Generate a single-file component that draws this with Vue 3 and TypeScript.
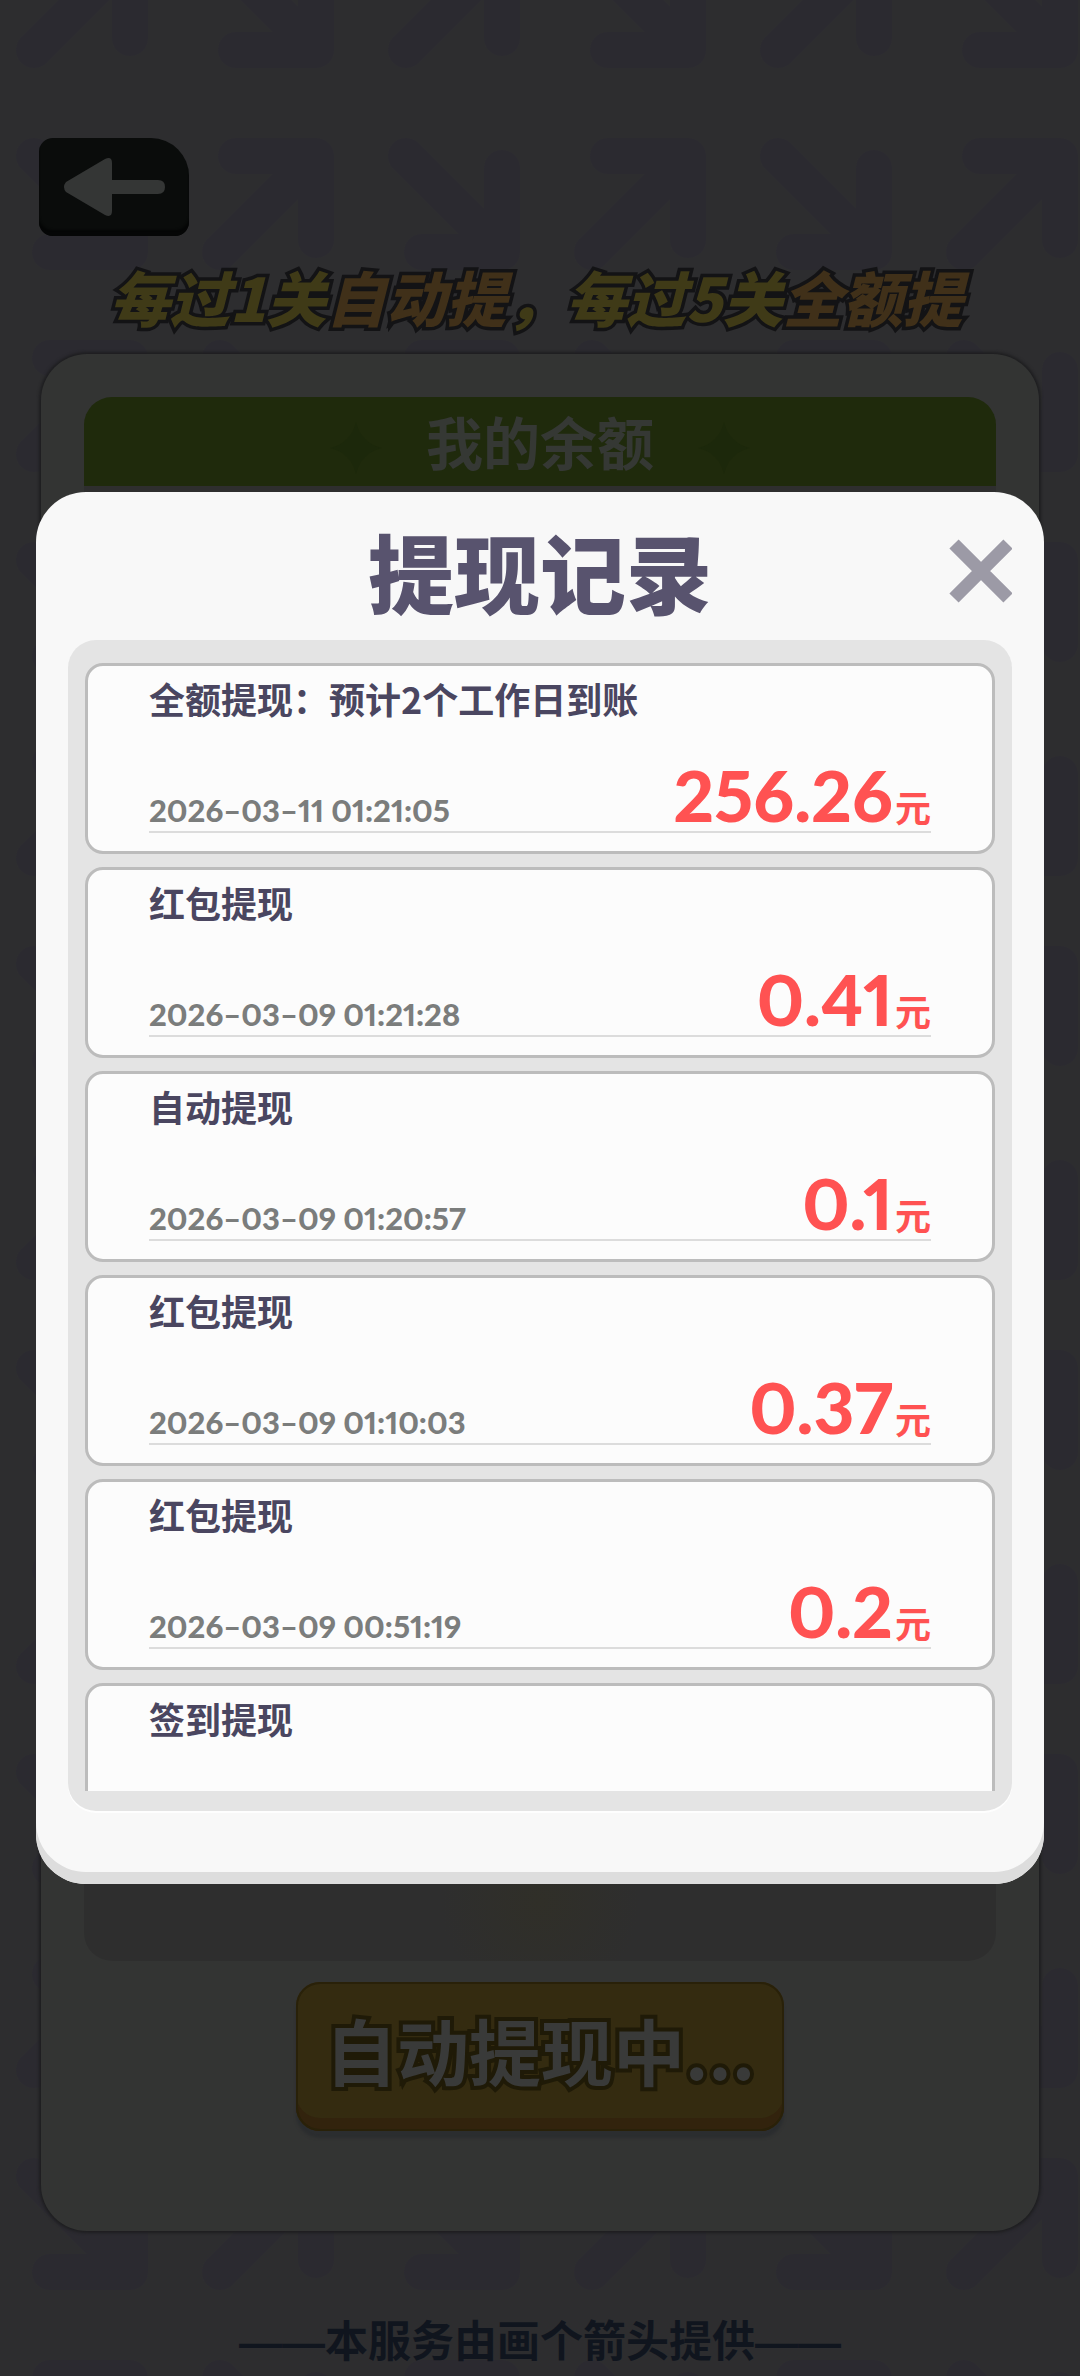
<script setup lang="ts">
import { ref } from 'vue'

interface WithdrawRecord {
  title: string
  time: string
  amount: string
}

const records: WithdrawRecord[] = [
  { title: '全额提现：预计2个工作日到账', time: '2026–03–11 01:21:05', amount: '256.26' },
  { title: '红包提现', time: '2026–03–09 01:21:28', amount: '0.41' },
  { title: '自动提现', time: '2026–03–09 01:20:57', amount: '0.1' },
  { title: '红包提现', time: '2026–03–09 01:10:03', amount: '0.37' },
  { title: '红包提现', time: '2026–03–09 00:51:19', amount: '0.2' },
  { title: '签到提现', time: '', amount: '0.1' },
]

const open = ref(true)
</script>

<template>
  <div class="page" lang="zh-CN">
    <svg class="backdrop" aria-hidden="true">
      <defs>
        <g id="arrow" fill="none" stroke="#2b2a30" stroke-width="36" stroke-linecap="round" stroke-linejoin="round">
          <path d="M36 20H116V104M20 116L112 24" />
        </g>
        <pattern id="arrows" x="14" y="-66" width="372" height="404" patternUnits="userSpaceOnUse">
          <use href="#arrow" />
          <use href="#arrow" transform="translate(186 136) scale(1 -1)" />
          <use href="#arrow" transform="translate(0 338) scale(1 -1)" />
          <use href="#arrow" transform="translate(186 202)" />
        </pattern>
      </defs>
      <rect width="100%" height="100%" fill="url(#arrows)" />
    </svg>

    <main class="content">
      <button class="back" type="button" aria-label="返回">
        <svg viewBox="0 0 150 98" aria-hidden="true">
          <path d="M27 44Q23 49 27 54L66 77Q73 80 73 73V56H119Q126 56 126 49Q126 42 119 42H73V25Q73 18 66 21Z" />
        </svg>
      </button>

      <h1 class="slogan">每过1关<em>自动提</em>，每过5关<em>全额提</em></h1>

      <section class="card">
        <header class="balance-head">
          <svg class="spark" viewBox="0 0 52 52" aria-hidden="true"><path d="M26 0Q31 21 52 26Q31 31 26 52Q21 31 0 26Q21 21 26 0Z" /></svg>
          <h2>我的余额</h2>
          <svg class="spark" viewBox="0 0 52 52" aria-hidden="true"><path d="M26 0Q31 21 52 26Q31 31 26 52Q21 31 0 26Q21 21 26 0Z" /></svg>
        </header>
        <div class="balance-body"></div>
        <button class="auto" type="button">自动提现中...</button>
      </section>

      <footer class="provider"><span class="rule">——</span>本服务由画个箭头提供<span class="rule">——</span></footer>
    </main>

    <div v-if="open" class="overlay">
      <section class="dialog" role="dialog" aria-modal="true" aria-labelledby="dialog-title">
        <header class="dialog-head">
          <h2 id="dialog-title">提现记录</h2>
          <button class="close" type="button" aria-label="关闭" @click="open = false">
            <svg viewBox="0 0 64 64" aria-hidden="true">
              <path d="M6 5L60 59M60 5L6 59" stroke="#9c9aa6" stroke-width="13" />
            </svg>
          </button>
        </header>
        <div class="list-panel">
          <ul class="list">
            <li v-for="(record, index) in records" :key="index" class="record">
              <h3>{{ record.title }}</h3>
              <div class="row">
                <time>{{ record.time }}</time>
                <span class="amount">{{ record.amount }}<small>元</small></span>
              </div>
            </li>
          </ul>
        </div>
      </section>
    </div>
  </div>
</template>

<style>
body {
  margin: 0;
  background: #2d2d2f;
}
</style>

<style scoped>
.page {
  position: relative;
  min-height: 100vh;
  overflow: hidden;
  background: #2d2d2f;
  font-family: "Noto Sans CJK SC", sans-serif;
}

h1,
h2,
h3,
ul {
  margin: 0;
  padding: 0;
}

button {
  padding: 0;
  border: 0;
  font-family: inherit;
}

.backdrop {
  position: absolute;
  inset: 0;
  width: 100%;
  height: 100%;
}

.content {
  position: relative;
  display: flex;
  flex-direction: column;
  min-height: 100vh;
  box-sizing: border-box;
  padding: 138px 41px 12px;
}

.back {
  width: 150px;
  height: 98px;
  margin-left: -2px;
  border-radius: 14px 38px 14px 14px;
  background: #0a0c0b;
  box-shadow: inset 0 -6px 2px #050606;
}

.back svg {
  display: block;
  fill: #343635;
}

.slogan {
  margin: 24px 0 22px;
  padding-right: 8px;
  color: #3f3a17;
  font-size: 60px;
  font-style: italic;
  font-weight: 900;
  line-height: 72px;
  text-align: center;
  white-space: nowrap;
  -webkit-text-stroke: 7px #131315;
  paint-order: stroke fill;
}

.slogan em {
  color: #403019;
}

.card {
  display: flex;
  flex: 1;
  flex-direction: column;
  padding: 43px 43px 100px;
  border-radius: 46px;
  background: #333433;
  box-shadow: 0 0 3px 2px #1e1e20;
}

.balance-head {
  display: flex;
  align-items: center;
  justify-content: center;
  gap: 44px;
  height: 89px;
  border-radius: 28px 28px 0 0;
  background: #1f2a0c;
}

.balance-head h2 {
  padding-bottom: 4px;
  color: #353834;
  font-size: 57px;
  font-weight: 700;
  line-height: 72px;
}

.spark {
  width: 52px;
  height: 52px;
  padding-top: 12px;
  fill: #1c280b;
}

.balance-body {
  flex: 1;
  border-radius: 0 0 28px 28px;
  background: radial-gradient(circle at 50% 96%, #302f28 0, #2e2e2e 100px);
}

.auto {
  align-self: center;
  width: 488px;
  height: 149px;
  margin-top: 21px;
  padding-bottom: 16px;
  border-radius: 24px;
  background: #342b10;
  box-shadow: inset 0 0 0 2px #292109, inset 0 -13px 0 #32230d, 0 7px 3px #2b2d2f;
  color: #393a39;
  font-size: 72px;
  font-weight: 700;
  line-height: 96px;
  -webkit-text-stroke: 8px #1f1a07;
  paint-order: stroke fill;
}

.provider {
  margin-top: 85px;
  color: #10151e;
  font-size: 43px;
  font-weight: 700;
  line-height: 44px;
  text-align: center;
  white-space: nowrap;
}

.rule {
  font-family: "Liberation Sans", sans-serif;
}

.overlay {
  position: absolute;
  inset: 0;
  display: flex;
  align-items: center;
  padding: 0 36px;
}

.dialog {
  flex: 1;
  min-width: 0;
  padding: 0 32px 73px;
  border-radius: 50px;
  background: #f8f8f8;
  box-shadow: inset 0 -12px 0 #dddddd;
}

.dialog-head {
  display: grid;
  grid-template-columns: 64px 1fr 64px;
  align-items: center;
  box-sizing: border-box;
  height: 148px;
  padding-top: 10px;
}

.dialog-head h2 {
  grid-column: 2;
  color: #58536e;
  font-size: 86px;
  font-weight: 900;
  line-height: 96px;
  text-align: center;
}

.close {
  width: 64px;
  height: 64px;
  background: none;
}

.close svg {
  display: block;
}

.list-panel {
  padding: 23px 17px 20px;
  border-radius: 28px;
  background: #e4e4e4;
  box-shadow: 0 2px 0 #fefefe;
}

.list {
  display: flex;
  flex-direction: column;
  gap: 13px;
  height: 1128px;
  overflow: hidden;
  list-style: none;
}

.record {
  display: flex;
  flex: none;
  flex-direction: column;
  justify-content: space-between;
  box-sizing: border-box;
  height: 191px;
  padding: 10px 61px 18px;
  border: 3px solid #bcbcbc;
  border-radius: 18px;
  background: #fcfcfc;
}

.record h3 {
  color: #4a4660;
  font-size: 36px;
  font-weight: 700;
  line-height: 44px;
}

.row {
  display: flex;
  align-items: baseline;
  justify-content: space-between;
  border-bottom: 2px solid #dcdcdc;
  font-family: Lato, "Noto Sans CJK SC", sans-serif;
  font-variant-numeric: proportional-nums;
  line-height: 42px;
}

.row time {
  color: #7b7d7c;
  font-size: 31px;
  font-weight: 900;
}

.amount {
  color: #ff5252;
  font-size: 71px;
  font-weight: 900;
}

.amount small {
  margin-left: 2px;
  font-size: 36px;
  font-weight: 700;
}
</style>
